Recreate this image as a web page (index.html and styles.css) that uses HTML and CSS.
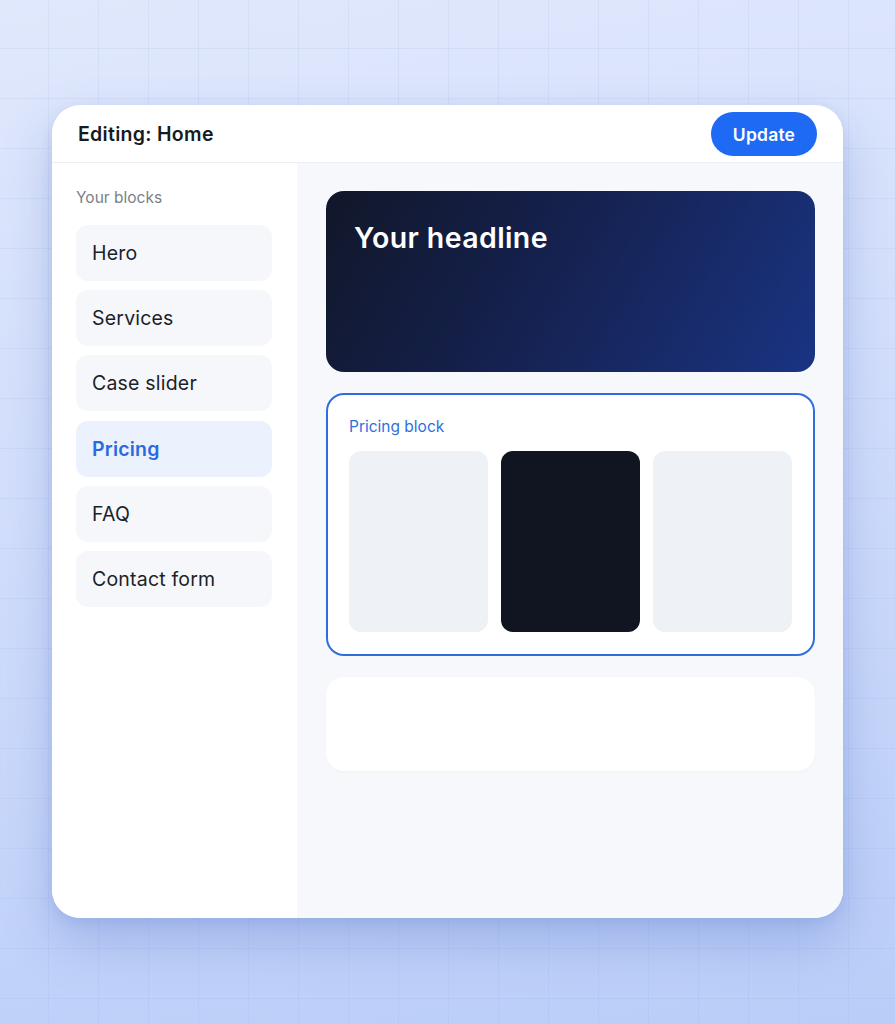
FILE: index.html
```html
<!DOCTYPE html>
<html lang="en">
<head>
<meta charset="utf-8">
<title>Editing: Home</title>
<link rel="stylesheet" href="styles.css">
</head>
<body>
<div class="stage">
  <div class="window">
    <header class="topbar">
      <h1 class="title">Editing: Home</h1>
      <button class="update">Update</button>
    </header>
    <div class="body">
      <aside class="sidebar">
        <div class="side-label">Your blocks</div>
        <ul class="blocks">
          <li class="block">Hero</li>
          <li class="block">Services</li>
          <li class="block">Case slider</li>
          <li class="block active">Pricing</li>
          <li class="block">FAQ</li>
          <li class="block">Contact form</li>
        </ul>
      </aside>
      <main class="canvas">
        <section class="hero"><h2 class="headline">Your headline</h2></section>
        <section class="pricing">
          <div class="pricing-label">Pricing block</div>
          <div class="tiers">
            <div class="tier"></div>
            <div class="tier dark"></div>
            <div class="tier"></div>
          </div>
        </section>
        <section class="empty"></section>
      </main>
    </div>
  </div>
</div>
</body>
</html>
```
FILE: styles.css
```css
* { box-sizing: border-box; }
html, body { margin: 0; padding: 0; }
body {
  width: 895px;
  height: 1024px;
  overflow: hidden;
  font-family: Inter, "DejaVu Sans", sans-serif;
  background-color: #c9d8fa;
  background-image:
    linear-gradient(rgba(140,160,215,0.12) 1px, transparent 1px),
    linear-gradient(90deg, rgba(140,160,215,0.12) 1px, transparent 1px),
    linear-gradient(170deg, #e0e8fc 0%, #d2defb 45%, #b9cdf8 100%);
  background-size: 50px 50px, 50px 50px, 100% 100%;
  background-position: -2px -2px, -2px -2px, 0 0;
}
.stage {
  padding: 105px 52px 0 52px;
}
.window {
  width: 791px;
  height: 813px;
  background: #ffffff;
  border-radius: 28px;
  overflow: hidden;
  display: flex;
  flex-direction: column;
  box-shadow: 0 24px 50px rgba(70,100,190,0.28), 0 4px 12px rgba(70,100,190,0.12);
}
.topbar {
  height: 58px;
  flex: none;
  display: flex;
  align-items: center;
  justify-content: space-between;
  padding: 0 26px 0 26px;
  border-bottom: 1px solid #eceef2;
}
.title {
  margin: 0;
  font-size: 19.5px;
  font-weight: 600;
  color: #161a22;
  letter-spacing: 0.3px;
}
.update {
  width: 106px;
  height: 44px;
  border: none;
  border-radius: 22px;
  background: #1f6af5;
  color: #fff;
  font-family: inherit;
  font-size: 17.5px;
  font-weight: 600;
  letter-spacing: 0.2px;
  margin-top: 1px;
  cursor: pointer;
}
.body {
  flex: 1;
  display: flex;
}
.sidebar {
  width: 245px;
  flex: none;
  background: #fff;
  padding: 25px 25px 0 24px;
}
.side-label {
  font-size: 15.5px;
  color: #7b808a;
  line-height: 20px;
  margin-bottom: 17px;
}
.blocks {
  list-style: none;
  margin: 0;
  padding: 0;
  display: flex;
  flex-direction: column;
  gap: 9.2px;
}
.block {
  height: 56px;
  border-radius: 12px;
  background: #f5f7fa;
  display: flex;
  align-items: center;
  padding-left: 16px;
  font-size: 19.5px;
  letter-spacing: 0.2px;
  color: #1b1f29;
}
.block.active {
  background: #ebf2fe;
  color: #2a6ae0;
  font-weight: 600;
}
.canvas {
  flex: 1;
  background: #f6f8fb;
  padding: 28px 28px 0 29px;
  display: flex;
  flex-direction: column;
  gap: 21px;
}
.hero {
  height: 181px;
  border-radius: 18px;
  background: linear-gradient(120deg, #111729 0%, #15214f 45%, #1a3483 100%);
  padding: 29px 28px;
}
.headline {
  margin: 0;
  color: #fff;
  font-size: 28.5px;
  font-weight: 600;
  letter-spacing: 0.4px;
}
.pricing {
  height: 263px;
  border: 2px solid #2f6ee0;
  border-radius: 18px;
  background: #fff;
  padding: 22px 21px 0 21px;
}
.pricing-label {
  font-size: 15.5px;
  color: #2f6ee0;
  line-height: 20px;
  margin-bottom: 14px;
}
.tiers {
  display: grid;
  grid-template-columns: repeat(3, 1fr);
  gap: 13px;
}
.tier {
  height: 181px;
  border-radius: 12px;
  background: #eef2f7;
}
.tier.dark {
  background: #111522;
}
.empty {
  height: 94px;
  border-radius: 18px;
  background: #fff;
  box-shadow: 0 1px 3px rgba(20,30,60,0.03);
}
```
